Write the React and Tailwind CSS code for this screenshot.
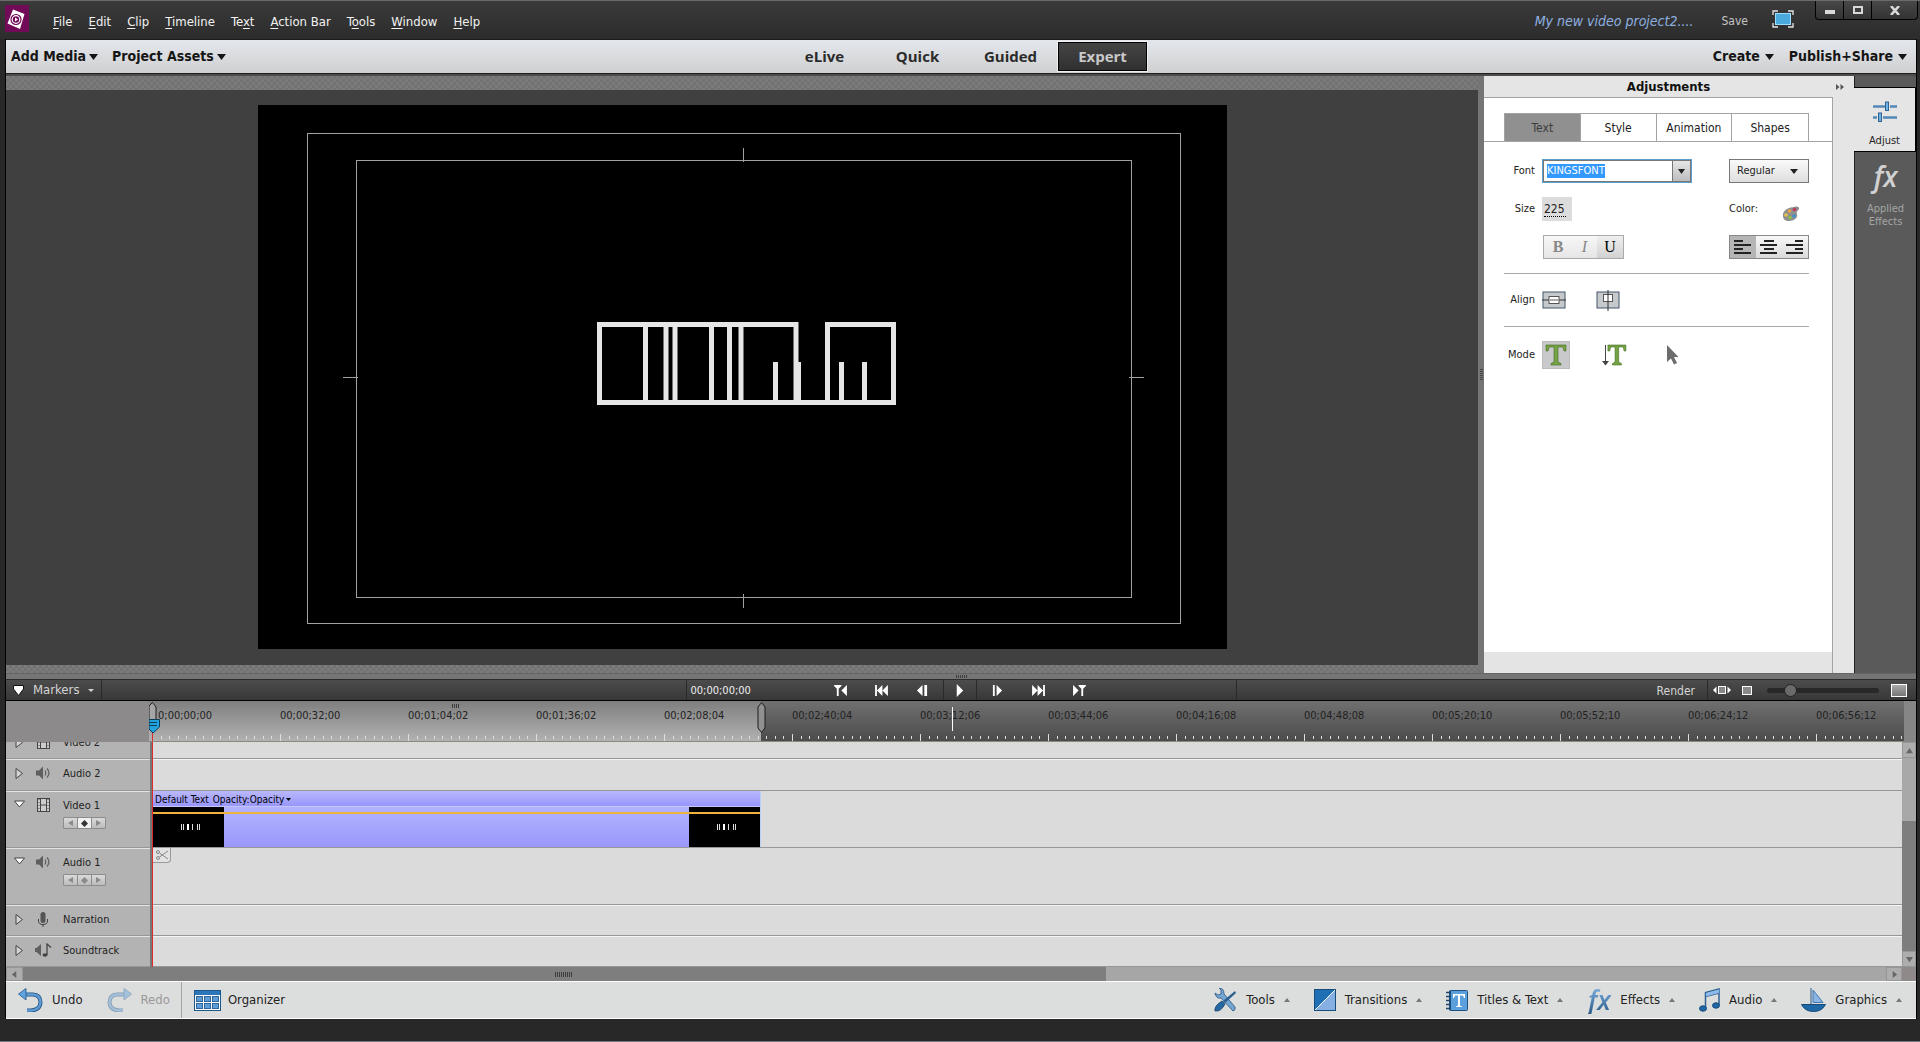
// src/App.jsx
import React, { useEffect, useRef, useState } from 'react';

const MENUS = [
  ['', 'F', 'ile'],
  ['', 'E', 'dit'],
  ['', 'C', 'lip'],
  ['', 'T', 'imeline'],
  ['Te', 'x', 't'],
  ['', 'A', 'ction Bar'],
  ['T', 'o', 'ols'],
  ['', 'W', 'indow'],
  ['', 'H', 'elp'],
];

const TIMECODES = [
  '0;00;00;00', '00;00;32;00', '00;01;04;02', '00;01;36;02', '00;02;08;04',
  '00;02;40;04', '00;03;12;06', '00;03;44;06', '00;04;16;08', '00;04;48;08',
  '00;05;20;10', '00;05;52;10', '00;06;24;12', '00;06;56;12',
];

/* ---------- small shapes ---------- */

const Caret = ({ className = 'w-[9px] h-[6px]', up = false }) => (
  <svg className={`shrink-0 ${className}`} viewBox="0 0 10 6" preserveAspectRatio="none" fill="currentColor">
    <path d={up ? 'M0 6L5 0L10 6Z' : 'M0 0H10L5 6Z'} />
  </svg>
);

const Grip = ({ className }) => (
  <span className={`bg-[repeating-linear-gradient(90deg,#3d3d3d_0_1px,transparent_1px_2px)] ${className}`} />
);

const AppLogo = () => (
  <svg className="w-[24px] h-[27px] shrink-0 mt-[4px]" viewBox="0 0 24 27">
    <rect width="24" height="27" fill="#720b57" />
    <path d="M8 4.500L19.500 9L15 24L2.500 18.500Z" fill="#fff" />
    <circle cx="11" cy="14.500" r="5" fill="none" stroke="#720b57" strokeWidth="1.200" />
    <circle cx="11" cy="14.500" r="3.200" fill="#720b57" />
    <path d="M10 12.500L13 14.500L10 16.500Z" fill="#fff" />
  </svg>
);

/* ---------- title bar ---------- */

const TitleBar = () => (
  <header className="flex h-[39px] shrink-0 items-start border-t border-[#6b6b6b] bg-linear-to-b from-[#3a3a3a] to-[#2c2c2c] pl-[5px] pr-[2px]">
    <AppLogo />
    <nav className="ml-6 flex gap-4 pt-[13px] text-[13px] leading-4 text-[#f2f2f2]">
      {MENUS.map(([a, b, c]) => (
        <button key={a + b + c} className="whitespace-pre">
          {a}<span className="underline underline-offset-2">{b}</span>{c}
        </button>
      ))}
    </nav>
    <div className="ml-auto flex items-start">
      <span className="pt-3 text-[14px] italic leading-4 text-[#8fb0e0]">My new video project2....</span>
      <button className="ml-7 pt-3 text-[12px] leading-4 text-[#c4c4c4]">Save</button>
      <button aria-label="Full screen" className="ml-6 pt-[9px]">
        <svg className="w-[22px] h-[18px]" viewBox="0 0 22 18">
          <path d="M1 5V1H6M16 1H21V5M21 13V17H16M6 17H1V13" fill="none" stroke="#e6e6e6" strokeWidth="1.300" />
          <rect x="3.500" y="3.500" width="15" height="11" fill="#4aaade" stroke="#9edcff" />
        </svg>
      </button>
      <div className="ml-[21px] flex h-[19px] overflow-hidden rounded-b-sm border border-t-0 border-black bg-linear-to-b from-[#484848] to-[#333]">
        <button aria-label="Minimize" className="flex w-7 items-center justify-center border-r border-black">
          <span className="mt-1 h-[4px] w-[10px] bg-[#d8d8d8]" />
        </button>
        <button aria-label="Maximize" className="flex w-7 items-center justify-center border-r border-black">
          <span className="h-[8px] w-[10px] border-2 border-[#d8d8d8]" />
        </button>
        <button aria-label="Close" className="flex w-[45px] items-center justify-center">
          <svg className="w-[10px] h-[9px]" viewBox="0 0 10 9"><path d="M1 0L9 9M9 0L1 9" stroke="#d8d8d8" strokeWidth="2.600" /></svg>
        </button>
      </div>
    </div>
  </header>
);

/* ---------- mode bar ---------- */

const ModeBar = () => {
  const [mode, setMode] = useState('Expert');
  return (
    <div className="grid h-[35px] shrink-0 grid-cols-[1fr_auto_1fr] items-center border-y border-[#1c1c1c] bg-linear-to-b from-[#e3e7ec] to-[#d0d0d1] text-[14px] font-bold text-[#151515]">
      <div className="flex gap-[14px] pl-[5px]">
        <button className="flex items-center gap-[3px]">Add Media <Caret /></button>
        <button className="flex items-center gap-[3px]">Project Assets <Caret /></button>
      </div>
      <div className="flex items-center pl-[3px] font-['Open_Sans','Noto_Sans',sans-serif]">
        {['eLive', 'Quick', 'Guided', 'Expert'].map((m) => (
          <button
            key={m}
            onClick={() => setMode(m)}
            className={`h-[29px] pb-[2px] text-[15px] leading-6 ${mode === m
              ? 'ml-px w-[89px] border border-black bg-linear-to-b from-[#454545] to-[#303030] text-[#c9c9c9] outline outline-white/60'
              : 'w-[93px] text-[#2b2b2b]'}`}
          >
            {m}
          </button>
        ))}
      </div>
      <div className="flex justify-end gap-[15px] pr-[9px]">
        <button className="flex items-center gap-[5px]">Create <Caret /></button>
        <button className="flex items-center gap-[5px]">Publish+Share <Caret /></button>
      </div>
    </div>
  );
};

/* ---------- monitor ---------- */

const Hatch = ({ className }) => (
  <div className={`shrink-0 bg-[repeating-conic-gradient(#727272_0_25%,#7b7b7b_0_50%)] bg-[length:6px_6px] ${className}`} />
);

const Monitor = () => (
  <section className="flex min-h-0 min-w-0 flex-1 flex-col bg-[#404040]">
    <Hatch className="h-[14px]" />
    <div className="flex min-h-0 flex-1 justify-center pb-4 pt-[15px]">
      <svg className="h-full min-h-0 max-w-full" viewBox="0 0 969 544">
        <rect width="969" height="544" fill="#000" />
        <g fill="none" stroke="#a2a2a2">
          <rect x="49.500" y="28.500" width="873" height="490" />
          <rect x="98.500" y="55.500" width="775" height="437" />
          <path d="M485.500 43V57M485.500 489V503M85 272.500H100M871 272.500H886" />
        </g>
        {/* title rendered as overlapping glyph boxes */}
        <g fill="none" stroke="#e6e6e6" strokeWidth="5">
          <path d="M341.500 219.500H538V297.500H341.500ZM569.500 219.500H635.500V297.500H569.500Z" />
          <path d="M536 297.500H570" />
          <path d="M387.500 219V298M408 219V298M417 219V298M453.500 219V298M471.500 219V298M483 219V298" />
          <path d="M517.500 257V298M540.500 257V298M583.500 257V298M606.500 257V298" />
        </g>
      </svg>
    </div>
    <Hatch className="h-[8px]" />
  </section>
);

/* ---------- adjustments panel ---------- */

const AlignIcon = ({ d }) => (
  <svg className="w-[18px] h-[15px]" viewBox="0 0 18 15"><path d={d} stroke="#222" strokeWidth="2" /></svg>
);

const SerifT = () => (
  <path d="M1 1H21V7H19L18 3H13V18L16 19.500V21H6V19.500L9 18V3H4L3 7H1Z" fill="#76a346" stroke="#3f6a1d" strokeWidth=".6" />
);

const AdjustmentsPanel = () => {
  const [tab, setTab] = useState('Text');
  const fontRef = useRef(null);

  useEffect(() => {
    fontRef.current?.focus();
    fontRef.current?.select();
  }, []);

  return (
    <aside className="flex w-[370px] shrink-0 flex-col bg-[#e5e5e5] text-[11px] leading-4 text-[#222]">
      <div className="flex h-[21px] items-center pr-[10px]">
        <h2 className="flex-1 pl-[17px] text-center text-[13px] font-bold text-[#111]">Adjustments</h2>
        <button aria-label="Collapse panel">
          <svg className="w-[8px] h-[6px]" viewBox="0 0 8 6" fill="#555"><path d="M0 0L3.500 3L0 6ZM4.500 0L8 3L4.500 6Z" /></svg>
        </button>
      </div>
      <div className="mr-[21px] flex flex-1 flex-col border-r border-t border-[#a3a3a3] bg-white">
        <div role="tablist" className="flex border-b border-[#a3a3a3] pl-5 pr-[23px] pt-[15px]">
          <div className="grid flex-1 grid-cols-4 border-x border-t border-[#a3a3a3] text-[12px]">
            {['Text', 'Style', 'Animation', 'Shapes'].map((t) => (
              <button
                key={t}
                role="tab"
                aria-selected={tab === t}
                onClick={() => setTab(t)}
                className={`h-[27px] border-r border-[#a3a3a3] last:border-r-0 ${tab === t ? 'bg-[#909090] text-[#3c3c3c]' : ''}`}
              >
                {t}
              </button>
            ))}
          </div>
        </div>

        <div className="flex flex-col pl-5 pr-[23px]">
          <div className="mt-[17px] flex h-6 items-center">
            <label htmlFor="font" className="w-[31px] text-right">Font</label>
            <div className="ml-[7px] flex h-6 w-[150px] border border-[#5aa0cc] bg-white p-px outline-1 -outline-offset-2 outline-[#777]">
              <input
                id="font"
                ref={fontRef}
                defaultValue="KINGSFONT"
                spellCheck={false}
                className="my-auto h-[14px] min-w-0 flex-1 pl-[3px] text-[11px] leading-[14px] outline-none selection:bg-[#3399ff] selection:text-white"
              />
              <button aria-label="Font list" className="flex w-[18px] items-center justify-center border-l border-[#777] bg-linear-to-b from-[#e6e6e6] to-[#bdbdbd]">
                <Caret className="w-[7px] h-[5px]" />
              </button>
            </div>
            <div className="relative ml-auto">
              <select aria-label="Font style" className="h-6 w-20 appearance-none border border-[#777] bg-linear-to-b from-[#fafafa] to-[#dedede] pl-[7px]">
                <option>Regular</option>
              </select>
              <Caret className="pointer-events-none absolute right-[11px] top-[10px] w-[8px] h-[5px]" />
            </div>
          </div>

          <div className="mt-[14px] flex h-6 items-center">
            <label htmlFor="size" className="w-[31px] text-right">Size</label>
            <div className="ml-[7px] flex h-6 w-[30px] items-center bg-[#dcdcdc] pl-[2px]">
              <input id="size" defaultValue="225" className="w-[22px] border-b border-dotted border-black text-[12px] leading-[14px] outline-none" />
            </div>
            <div className="ml-auto flex w-20 items-center">
              <span>Color:</span>
              <button aria-label="Text color" className="ml-6 mt-[10px]">
                <svg className="w-[18px] h-[16px]" viewBox="0 0 18 16">
                  <path d="M1 10C0 4 8 1 12 1C15 0 18 1 17 3C16 5 14 5 15 8C16 12 12 15 7 15C3 15 1 13 1 10Z" fill="#8f8f8f" />
                  <circle cx="12.500" cy="3.500" r="1.800" fill="#c0395f" />
                  <circle cx="7.500" cy="5" r="1.800" fill="#efa43b" />
                  <circle cx="4" cy="9" r="1.800" fill="#e8c44a" />
                  <circle cx="8" cy="11.500" r="1.800" fill="#8cc14a" />
                  <circle cx="12" cy="10" r="1.800" fill="#3f8fcf" />
                </svg>
              </button>
            </div>
          </div>

          <div className="mt-[14px] flex h-6 items-stretch pl-[39px]">
            <div className="flex border border-[#aaa] bg-linear-to-b from-[#f7f7f7] to-[#e6e6e6] font-['Liberation_Serif',serif] text-[16px] leading-5">
              <button className="w-7 font-bold text-[#888]">B</button>
              <button className="w-[25px] italic text-[#888]">I</button>
              <button className="w-[26px] bg-linear-to-b from-[#efefef] to-[#d2d2d2] text-black">U</button>
            </div>
            <div className="ml-auto flex w-20 border border-[#888] bg-linear-to-b from-[#f7f7f7] to-[#dadada]">
              <button aria-label="Align left" className="flex flex-1 items-center justify-center bg-[#b5b5b5]"><AlignIcon d="M0 1H9M0 5H17M0 9H9M0 13H17" /></button>
              <button aria-label="Align center" className="flex flex-1 items-center justify-center"><AlignIcon d="M4 1H14M0 5H17M4 9H14M0 13H17" /></button>
              <button aria-label="Align right" className="flex flex-1 items-center justify-center"><AlignIcon d="M9 1H17M0 5H17M9 9H17M0 13H17" /></button>
            </div>
          </div>

          <div className="mt-[14px] flex h-[54px] items-center border-y border-[#a9a9a9]">
            <span className="w-[31px] text-right">Align</span>
            <button aria-label="Center vertically" className="ml-[7px]">
              <svg className="w-[24px] h-[22px]" viewBox="0 0 24 22">
                <rect x="1" y="3" width="22" height="16" fill="#c6c9cc" stroke="#43566a" />
                <path d="M0 11H24" stroke="#333" />
                <rect x="7" y="7.500" width="10" height="7" fill="#fff" stroke="#555" />
                <path d="M8 11H16" stroke="#555" />
              </svg>
            </button>
            <button aria-label="Center horizontally" className="ml-[30px]">
              <svg className="w-[24px] h-[22px]" viewBox="0 0 24 22">
                <rect x="1" y="3" width="22" height="16" fill="#c6c9cc" stroke="#43566a" />
                <rect x="7.500" y="5.500" width="9" height="7" fill="#fff" stroke="#555" />
                <path d="M12 1V22" stroke="#333" />
              </svg>
            </button>
          </div>

          <div className="mt-[14px] flex h-7 items-center">
            <span className="w-[31px] text-right">Mode</span>
            <button aria-label="Horizontal type" className="ml-[7px] flex size-7 items-center justify-center border border-[#bbb] bg-[#c9c9cb]">
              <svg className="size-[22px]" viewBox="0 0 22 22"><SerifT /></svg>
            </button>
            <button aria-label="Vertical type" className="ml-8">
              <svg className="w-[26px] h-[22px]" viewBox="0 0 26 22">
                <path d="M3.500 1V18" stroke="#444" />
                <path d="M0 17H7L3.500 21.500Z" fill="#444" />
                <g transform="translate(5 0) scale(.9 1)"><SerifT /></g>
              </svg>
            </button>
            <button aria-label="Selection arrow" className="ml-[38px]">
              <svg className="w-[13px] h-[20px]" viewBox="0 0 13 20"><path d="M1 0L12.500 12H8L11 18L8 19.500L5 13.500L1 17Z" fill="#6c6c6c" /></svg>
            </button>
          </div>
        </div>
        <div className="mt-auto h-[21px] bg-[#e4e4e4]" />
      </div>
    </aside>
  );
};

const SideTabs = () => (
  <div className="flex w-[62px] shrink-0 flex-col border-l border-[#222] bg-[#5a5a5a] pt-[11px] text-center text-[11px] leading-[13px]">
    <button className="-ml-px flex h-[65px] flex-col items-center border-y border-r border-black bg-[#e5e5e5] pt-[13px] text-[#222]">
      <svg className="w-[24px] h-[21px]" viewBox="0 0 24 21" stroke="#2f628f">
        <path d="M0 5.500H12M17 5.500H24M0 16.500H4M10 16.500H24" stroke="#5288b5" strokeWidth="2.500" />
        <rect x="12.500" y="1" width="3" height="8.500" fill="#6fb3e6" />
        <rect x="5.500" y="12" width="3" height="8.500" fill="#6fb3e6" />
      </svg>
      <span className="mt-[12px]">Adjust</span>
    </button>
    <button className="flex flex-col items-center pt-[7px] text-[#a5a5a5]">
      <span className="font-['Open_Sans',sans-serif] text-[28px] font-semibold italic leading-[34px] text-[#d2d2d2]">fx</span>
      <span className="mt-[9px]">Applied<br />Effects</span>
    </button>
  </div>
);

/* ---------- transport ---------- */

const TRANSPORT = [
  { label: 'Previous edit', d: 'M0 0H8V1L5 4V12H3V4L0 1ZM14 0V12L8 6Z' },
  { label: 'Rewind', d: 'M0 0H2V12H0ZM8 0V12L2 6ZM14 0V12L8 6Z' },
  { label: 'Step back', d: 'M7 0V12L1 6ZM9 0H12V12H9Z' },
  { label: 'Play', d: 'M4 -1L11 6L4 13Z', play: true },
  { label: 'Step forward', d: 'M2 0H4V12H2ZM6 0L12 6L6 12Z' },
  { label: 'Fast forward', d: 'M0 0L6 6L0 12ZM6 0L12 6L6 12ZM12 0H14V12H12Z' },
  { label: 'Next edit', d: 'M0 0L6 6L0 12ZM6 0H14V1L11 4V12H9V4L6 1Z' },
];

const TransportBar = () => (
  <div className="grid h-[22px] shrink-0 grid-cols-[1fr_551px_1fr] border-b border-t border-b-black border-t-[#2b2b2b] bg-linear-to-b from-[#4c4c4c] to-[#383838] text-[#d4d4d4]">
    <div className="flex">
      <button className="flex items-center border-r border-[#2a2a2a] px-[7px] text-[13px] leading-4">
        <svg className="w-[11px] h-[11px]" viewBox="0 0 11 11"><path d="M.5 .5H10.500V4L5.500 10.500L.5 4Z" fill="#fff" stroke="#111" /></svg>
        <span className="ml-[9px]">Markers</span>
        <Caret className="ml-[9px] h-[3px] w-[6px]" />
      </button>
    </div>
    <div className="flex items-center border-x border-[#2a2a2a]">
      <output className="pl-[4px] pt-px text-[11px] leading-4 text-[#eee]">00;00;00;00</output>
      <div className="ml-auto mr-[136px] flex self-stretch">
        {TRANSPORT.map(({ label, d, play }) => (
          <button
            key={label}
            aria-label={label}
            className={`flex items-center justify-center ${play ? 'w-[34px] border-x border-[#2a2a2a]' : 'w-[41px]'}`}
          >
            <svg className="w-[13px] h-[11px] overflow-visible" viewBox="0 0 14 12" fill="#fff"><path d={d} /></svg>
          </button>
        ))}
      </div>
    </div>
    <div className="flex items-center justify-end pr-[9px]">
      <button className="h-full border-r border-[#2a2a2a] pr-3 pt-px text-[12px] leading-4">Render</button>
      <button aria-label="Fit timeline" className="ml-[5px]">
        <svg className="w-[18px] h-[10px]" viewBox="0 0 18 10">
          <path d="M3.500 1.500V8.500L0 5ZM14.500 1.500V8.500L18 5Z" fill="#fff" />
          <rect x="5.500" y="1.500" width="7" height="7" fill="#888" stroke="#fff" />
        </svg>
      </button>
      <span className="ml-[11px] h-[9px] w-[10px] border border-white bg-[#8a8a8a]" />
      <input
        type="range"
        aria-label="Timeline zoom"
        defaultValue="17"
        className="ml-[15px] h-[13px] w-[112px] appearance-none bg-transparent [&::-webkit-slider-runnable-track]:h-[5px] [&::-webkit-slider-runnable-track]:rounded-full [&::-webkit-slider-runnable-track]:bg-[#282828] [&::-webkit-slider-thumb]:-mt-1 [&::-webkit-slider-thumb]:size-[13px] [&::-webkit-slider-thumb]:appearance-none [&::-webkit-slider-thumb]:rounded-full [&::-webkit-slider-thumb]:border [&::-webkit-slider-thumb]:border-[#222] [&::-webkit-slider-thumb]:bg-[#6a6a6a]"
      />
      <span className="ml-3 h-[13px] w-4 border border-white bg-linear-to-b from-[#aaa] to-[#777]" />
    </div>
  </div>
);

/* ---------- timeline ---------- */

const Ruler = () => (
  <div className="flex h-[41px]">
    <div className="w-[143px] shrink-0 bg-[#8c8a8a]" />
    <div className="relative min-w-0 flex-1 overflow-hidden border-b border-[#8f897c] bg-linear-to-b from-[#707070] to-[#4c4c4c] pl-[3px]">
      {/* work area */}
      <div className="absolute inset-y-0 left-0 w-[612px] bg-linear-to-b from-[#7f7f7f] to-[#b2b2b2]" />
      <svg className="absolute bottom-0 left-[3px] h-[7px] w-full">
        <defs>
          <pattern id="ticks" width="128" height="7" patternUnits="userSpaceOnUse">
            <path d="M.5 0V7" stroke="#dedede" />
            <path
              d={Array.from({ length: 14 }, (_, i) => `M${Math.round((i + 1) * 8.53) + 0.5} 2V5`).join('')}
              stroke="#dedede"
            />
          </pattern>
        </defs>
        <rect width="100%" height="7" fill="url(#ticks)" />
      </svg>
      <div className="relative flex text-[11px] leading-4 text-[#222]">
        {TIMECODES.map((t, i) => (
          <span key={t} className={`w-32 shrink-0 pt-[7px] ${i === 0 ? 'pl-[6px]' : ''}`}>{t}</span>
        ))}
      </div>
      <Grip className="absolute left-[303px] top-[3px] h-[4px] w-[8px]" />
      <svg className="absolute left-[608px] top-[1px] w-[9px] h-[31px]" viewBox="0 0 9 31">
        <path d="M4.500 .5L8 5V26L4.500 30.500L1 26V5Z" fill="#909090" stroke="#1d1d1d" />
      </svg>
      <span className="absolute left-[803px] top-[6px] h-6 w-px bg-white" />
      <svg className="absolute left-0 top-[1px] w-[11px] h-[40px]" viewBox="0 0 11 40">
        <path d="M0 4L3.500 .5L7 5V18H0Z" fill="#a5a5a5" stroke="#1d1d1d" />
        <path d="M0 17.500H10.500V25L4 31L0 27Z" fill="#22a2dc" stroke="#0d3d58" />
        <path d="M0 20.500H8M0 23.500H8" stroke="#0d3d58" />
        <path d="M3.500 31V40" stroke="#e02b2b" />
      </svg>
    </div>
    <div className="w-3 shrink-0 bg-[#868686]" />
  </div>
);

const FilmIcon = () => (
  <svg className="w-[13px] h-[14px]" viewBox="0 0 13 14">
    <rect x=".5" y=".5" width="12" height="13" fill="#ccc" stroke="#444" />
    <path d="M3.500 0V14M9.500 0V14M4 7H9" stroke="#444" />
    <path d="M2 1V14M11 1V14" stroke="#555" strokeDasharray="1 2" />
  </svg>
);

const SpeakerIcon = () => (
  <svg className="w-[15px] h-[14px]" viewBox="0 0 15 14">
    <path d="M0 4.500H3L7 .5V13.500L3 9.500H0Z" fill="#5f5f5f" />
    <path d="M9 4.500Q10.500 7 9 9.500M11 2.500Q15 7 11 11.500" fill="none" stroke="#5f5f5f" strokeWidth="1.200" />
  </svg>
);

const MicIcon = () => (
  <svg className="w-[15px] h-[15px]" viewBox="0 0 15 15">
    <rect x="4.500" y="0" width="5" height="11" rx="2.500" fill="#555" />
    <path d="M2.500 7V9Q2.500 12.500 7 12.500Q11.500 12.500 11.500 9V7M7 12V15" fill="none" stroke="#444" />
  </svg>
);

const SoundtrackIcon = () => (
  <svg className="w-[17px] h-[14px]" viewBox="0 0 17 14">
    <path d="M0 5H1.500L6 1V13L1.500 9H0Z" fill="#5f5f5f" />
    <path d="M12 12V1L16 4.500" fill="none" stroke="#444" strokeWidth="1.300" />
    <ellipse cx="10" cy="12" rx="2.500" ry="1.800" fill="#444" />
  </svg>
);

const Twirl = ({ open, name }) => (
  <button aria-label={`Toggle ${name}`} className="flex w-[11px] justify-center">
    <svg className="size-[11px]" viewBox="0 0 11 11">
      <path d={open ? 'M.5 1H10.500L5.500 7Z' : 'M2 .5L8.500 5.500L2 10.500Z'} fill={open ? '#fff' : '#d4d4d4'} stroke="#444" />
    </svg>
  </button>
);

const KeyframeButtons = ({ active }) => (
  <div className="mt-[3px] flex h-[12px] w-[43px] rounded-[1px] border border-[#8c8c8c] bg-linear-to-b from-[#dadada] to-[#bcbcbc] text-[#8a8a8a]">
    <button aria-label="Previous keyframe" className="flex flex-1 items-center justify-center">
      <svg className="w-[5px] h-[6px]" viewBox="0 0 5 6" fill="currentColor"><path d="M5 0V6L0 3Z" /></svg>
    </button>
    <button aria-label="Add keyframe" className={`flex flex-1 items-center justify-center border-x border-[#8c8c8c] ${active ? 'bg-[#f0f0f0] text-[#333]' : ''}`}>
      <svg className="size-[7px]" viewBox="0 0 8 8" fill="currentColor"><path d="M4 0L8 4L4 8L0 4Z" /></svg>
    </button>
    <button aria-label="Next keyframe" className="flex flex-1 items-center justify-center">
      <svg className="w-[5px] h-[6px]" viewBox="0 0 5 6" fill="currentColor"><path d="M0 0L5 3L0 6Z" /></svg>
    </button>
  </div>
);

const Thumb = () => (
  <div className="flex w-[71px] items-center justify-center bg-black pl-1">
    <svg className="w-[20px] h-[6px]" viewBox="0 0 20 6">
      <path d="M.5 0V6M2.500 0V6M11.500 0V6M16.500 0V6M18.500 0V6" stroke="#ddd" />
      <path d="M7 0V6" stroke="#fff" strokeWidth="2" />
    </svg>
  </div>
);

const Clip = () => (
  <div className="flex h-full w-[608px] flex-col border-r border-[#b8d0f5] text-[10px] leading-[15px] text-black">
    <div className="flex h-[15px] gap-1 bg-linear-to-b from-[#bab8fb] to-[#9896fb] pl-[2px] pt-px">
      <span>Default Text</span>
      <button className="flex items-center gap-[2px]">Opacity:Opacity <Caret className="w-[5px] h-[3px]" /></button>
    </div>
    <div className="relative flex flex-1 justify-between border-t border-[#c6c6ff] bg-linear-to-b from-[#b2b3ff] to-[#9a98fb]">
      <Thumb />
      <Thumb />
      <span className="absolute inset-x-0 top-[5px] h-[2px] bg-[#edb33c]" />
    </div>
  </div>
);

const Track = ({ name, icon, height, open, keyframes, active, children }) => (
  <div className={`flex ${height}`}>
    <div className="flex w-[144px] shrink-0 items-start border-b border-t border-b-[#979797] border-t-[#e4e4e4] bg-[#b3b3b3] pl-2 pt-[5px] text-[11px] leading-4 text-[#222]">
      <div className="flex h-4 items-center"><Twirl open={open} name={name} /></div>
      <div className="ml-[9px] flex h-4 w-[18px] items-center justify-center">{icon}</div>
      <div className="ml-[11px] pt-px">
        {name}
        {keyframes && <KeyframeButtons active={active} />}
      </div>
    </div>
    <div className="w-[3px] shrink-0 bg-[#777]" />
    <div className={`min-w-0 flex-1 border-b border-[#979797] bg-[#dbdbdb] ${children ? '' : 'border-t border-t-[#f4f4f4]'}`}>{children}</div>
  </div>
);

const ScrollButton = ({ label, d, className }) => (
  <button aria-label={label} className={`flex shrink-0 items-center justify-center border border-[#969696] bg-[#adadad] ${className}`}>
    <svg className="size-[7px]" viewBox="0 0 8 8" fill="#666"><path d={d} /></svg>
  </button>
);

const Timeline = () => (
  <section className="shrink-0">
    <Ruler />
    <div className="flex">
      <div className="relative min-w-0 flex-1">
        {/* Video 2 is scrolled half out of view */}
        <div className="flex h-[17px] flex-col justify-end overflow-hidden">
          <Track name="Video 2" icon={<FilmIcon />} height="h-[31px] shrink-0" />
        </div>
        <Track name="Audio 2" icon={<SpeakerIcon />} height="h-[32px]" />
        <Track name="Video 1" icon={<FilmIcon />} height="h-[57px]" open keyframes active><Clip /></Track>
        <Track name="Audio 1" icon={<SpeakerIcon />} height="h-[57px]" open keyframes>
          <button aria-label="Split clip" className="flex h-[15px] w-[18px] items-center justify-center rounded-br border-b border-r border-[#999] bg-[#e2e2e2]">
            <svg className="w-[12px] h-[10px]" viewBox="0 0 12 10" fill="none" stroke="#888">
              <circle cx="2" cy="2" r="1.500" /><circle cx="2" cy="8" r="1.500" />
              <path d="M3.500 3L12 9M3.500 7L12 1" />
            </svg>
          </button>
        </Track>
        <Track name="Narration" icon={<MicIcon />} height="h-[31px]" />
        <Track name="Soundtrack" icon={<SoundtrackIcon />} height="h-[31px]" />
        <span className="absolute inset-y-0 left-[146px] w-px bg-[#e02b2b]" />
      </div>
      <div className="flex w-[14px] shrink-0 flex-col bg-[#a8a8a8]">
        <ScrollButton label="Scroll up" d="M0 7L4 1L8 7Z" className="h-4" />
        <div className="mt-auto h-[130px] bg-[#7e7e7e]" />
        <ScrollButton label="Scroll down" d="M0 1H8L4 7Z" className="h-4" />
      </div>
    </div>
    <div className="flex h-[14px] bg-[#a6a6a6]">
      <ScrollButton label="Scroll left" d="M6 0V8L1 4Z" className="w-[17px]" />
      <div className="flex w-[56.7%] items-center justify-center bg-[#7e7e7e]"><Grip className="h-[5px] w-[18px]" /></div>
      <ScrollButton label="Scroll right" d="M2 0V8L7 4Z" className="ml-auto w-4" />
      <div className="w-[14px] shrink-0 bg-[#8f8989]" />
    </div>
  </section>
);

/* ---------- action bar ---------- */

const ACTIONS = [
  {
    label: 'Tools',
    icon: (
      <svg className="size-6" viewBox="0 0 24 24">
        <path d="M2 5L5 7L8 6V2L6 0Q11 0 11 6L22 19Q23 22 20 23L8 10Q3 11 2 5Z" fill="#74a6d4" stroke="#23527c" strokeWidth=".8" />
        <path d="M22 3L23 5L12 15L10 13Z" fill="#2b5f90" />
        <path d="M9 13L12 16Q8 24 2 23Q1 18 9 13Z" fill="#2367a3" stroke="#173f66" strokeWidth=".8" />
      </svg>
    ),
  },
  {
    label: 'Transitions',
    icon: (
      <svg className="w-[22px] h-[24px]" viewBox="0 0 22 24">
        <rect x=".5" y="1.500" width="21" height="21" fill="#86b0e4" stroke="#184c7d" />
        <path d="M1 2H21L1 22Z" fill="#1e6fb4" />
        <path d="M21 2L1 22" stroke="#fff" />
      </svg>
    ),
  },
  {
    label: 'Titles & Text',
    icon: (
      <svg className="w-[22px] h-[24px]" viewBox="0 0 22 24">
        <rect x="3.500" y="2.500" width="18" height="20" rx="1" fill="#5b9fdd" stroke="#1c527f" />
        <path d="M4 3V22" stroke="#1c527f" strokeWidth="2" />
        <path d="M0 4.500H5M0 8.500H5M0 12.500H5M0 16.500H5M0 20.500H5" stroke="#1b4670" strokeWidth="1.500" />
        <path d="M7 6H19V10H18L17 7.500H14V17.500L16 18.500V19H10V18.500L12 17.500V7.500H9L8 10H7Z" fill="#fff" />
      </svg>
    ),
  },
  {
    label: 'Effects',
    icon: (
      <span className="w-6 bg-linear-to-b from-[#7db4e6] to-[#2a5b88] bg-clip-text text-center font-['Open_Sans',sans-serif] text-[27px] font-semibold italic leading-7 text-transparent">fx</span>
    ),
  },
  {
    label: 'Audio',
    icon: (
      <svg className="w-[21px] h-[24px]" viewBox="0 0 21 24">
        <path d="M6.500 20V4.500L20 1V17M6.500 8.500L20 5" fill="none" stroke="#2c6295" strokeWidth="1.500" />
        <path d="M7 5L20 1.500V5L7 8.500Z" fill="#8bbbe8" />
        <ellipse cx="4" cy="20.500" rx="3.500" ry="2.700" fill="#1f68a8" stroke="#174a78" />
        <ellipse cx="17" cy="17.500" rx="3.500" ry="2.700" fill="#1f68a8" stroke="#174a78" />
      </svg>
    ),
  },
  {
    label: 'Graphics',
    icon: (
      <svg className="w-[25px] h-[24px]" viewBox="0 0 25 24">
        <path d="M10 0V16" stroke="#2a5b88" />
        <path d="M12 2L22 14.500H12Z" fill="#8cb5e6" stroke="#3f79b2" />
        <path d="M.5 16.500H24.500Q21 23.500 12.500 23.500Q4 23.500 .5 16.500Z" fill="#1f68a8" stroke="#174a78" />
      </svg>
    ),
  },
];

const CurvedArrow = ({ flip }) => (
  <svg className={`h-6 w-[25px] ${flip ? '-scale-x-100 opacity-45' : ''}`} viewBox="0 0 25 24" fill="none">
    <path d="M6 6.500H15Q22.500 7 22.500 14.500Q22 22 13 22.500H9" stroke="#23578a" strokeWidth="4" />
    <path d="M6 6.500H15Q22.500 7 22.500 14.500Q22 22 13 22.500H9" stroke="#5f9ad2" strokeWidth="2.400" />
    <path d="M8 .5V12L.5 6Z" fill="#5fa3e0" stroke="#23578a" strokeWidth=".8" />
  </svg>
);

const ActionBar = () => (
  <footer className="flex h-[38px] shrink-0 items-center border-y border-white bg-[#dcdddd] pr-[14px] text-[13px] leading-4 text-[#222]">
    <div className="flex h-full items-center gap-6 border-r border-[#a5a5a5] pl-3 pr-[11px]">
      <button className="flex items-center gap-[9px]"><CurvedArrow /> Undo</button>
      <button className="flex items-center gap-[9px] text-[#999]"><CurvedArrow flip /> Redo</button>
    </div>
    <button className="ml-3 flex items-center gap-[7px]">
      <svg className="w-[27px] h-[21px]" viewBox="0 0 27 21">
        <rect x=".5" y=".5" width="26" height="20" fill="#fff" stroke="#1b5788" />
        <rect x="1" y="1" width="25" height="4" fill="#2b75b8" />
        {[2.5, 10.5, 18.5].map((x) => (
          <g key={x} fill="#5e9cd8" stroke="#2f659a">
            <rect x={x} y="6.500" width="6" height="5" />
            <rect x={x} y="13.500" width="6" height="5" />
          </g>
        ))}
      </svg>
      Organizer
    </button>
    <div className="ml-auto flex gap-6">
      {ACTIONS.map(({ label, icon }) => (
        <button key={label} className="flex h-7 items-center gap-[9px]">
          {icon}
          {label}
          <Caret up className="h-[4px] w-[6px] text-[#777]" />
        </button>
      ))}
    </div>
  </footer>
);

const App = () => (
  <div className="flex h-screen flex-col bg-[#282828] font-['DejaVu_Sans_Condensed','Noto_Sans',sans-serif]">
    <TitleBar />
    <main className="ml-[5px] mr-[3px] flex min-h-0 flex-1 flex-col border-x border-black bg-[#282828]">
      <ModeBar />
      <div className="flex min-h-0 flex-1 border-t-2 border-[#4c4c4c]">
        <Monitor />
        <div className="flex w-[6px] shrink-0 items-center justify-center bg-[#757575]">
          <span className="h-[11px] w-[3px] bg-[repeating-linear-gradient(#444_0_1px,transparent_1px_2px)]" />
        </div>
        <AdjustmentsPanel />
        <SideTabs />
      </div>
      <div className="flex h-[6px] shrink-0 items-center justify-center border-t border-[#656565] bg-[#757575]">
        <Grip className="h-[3px] w-[11px]" />
      </div>
      <TransportBar />
      <Timeline />
      <ActionBar />
    </main>
    <div className="mt-px h-[22px] shrink-0 border-b border-[#6d7681]" />
  </div>
);

export default App;
